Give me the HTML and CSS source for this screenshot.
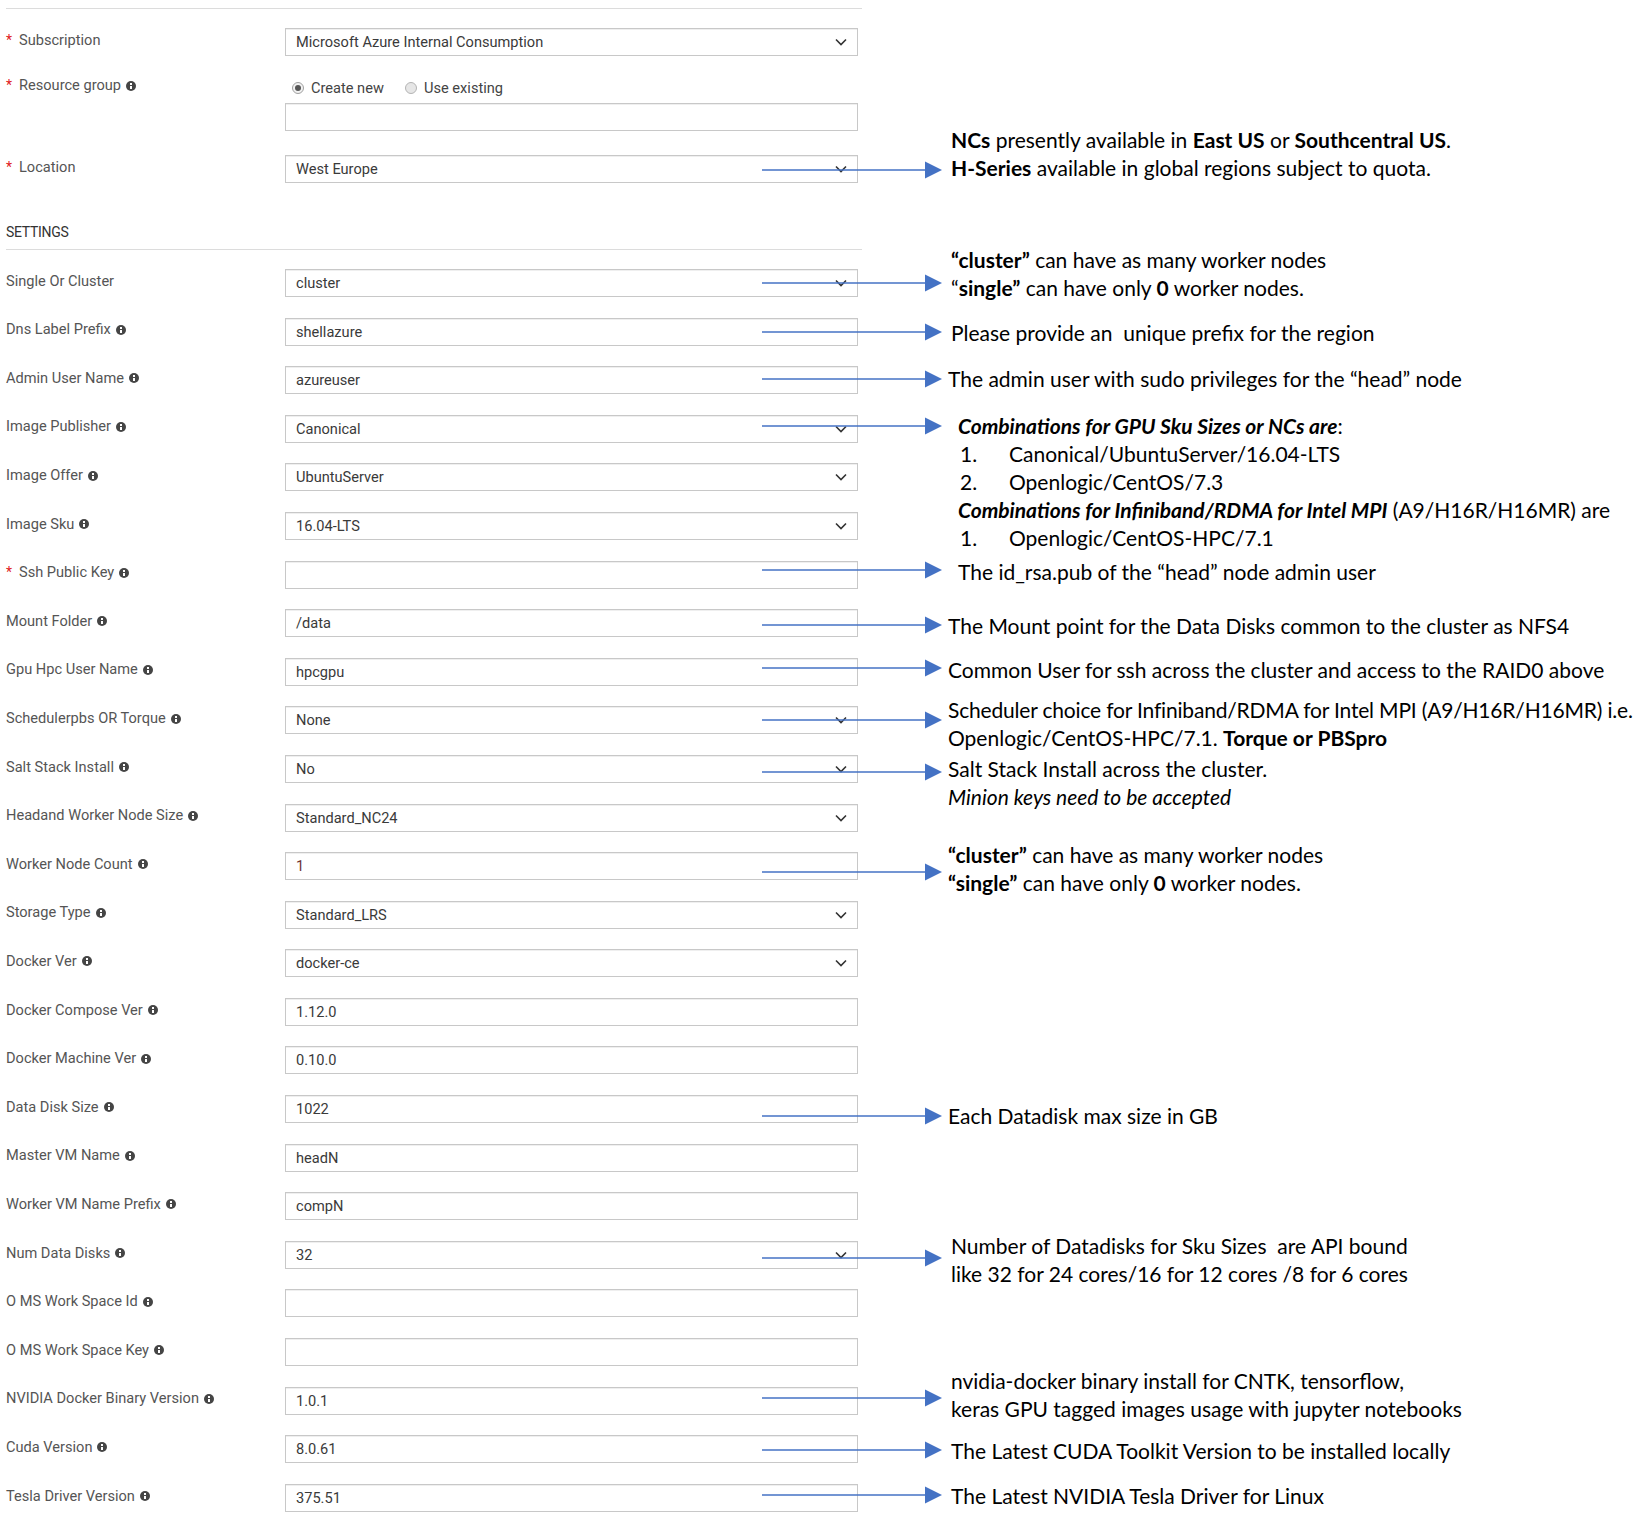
FILE: index.html
```html
<!DOCTYPE html>
<html lang="en">
<head>
<meta charset="utf-8">
<title>Settings</title>
<link rel="stylesheet" href="styles.css">
</head>
<body>
<div class="page">
  <div class="rule top-rule"></div>

  <div class="row r-sub">
    <div class="label"><span class="req">*</span>Subscription</div>
    <div class="field">Microsoft Azure Internal Consumption<svg class="chev" width="12" height="8" viewBox="0 0 12 8"><path d="M1 1.5 L6 6.5 L11 1.5"/></svg></div>
  </div>

  <div class="row r-rg">
    <div class="label"><span class="req">*</span>Resource group<span class="info"></span></div>
    <div class="fieldcol">
      <div class="radios">
        <div class="opt opt1"><span class="radio on"></span>Create new</div>
        <div class="opt"><span class="radio"></span>Use existing</div>
      </div>
      <div class="field field-rg"></div>
    </div>
  </div>

  <div class="row">
    <div class="label"><span class="req">*</span>Location</div>
    <div class="field">West Europe<svg class="chev" width="12" height="8" viewBox="0 0 12 8"><path d="M1 1.5 L6 6.5 L11 1.5"/></svg></div>
    <div class="ann k-loc"><svg class="arrow" width="180" height="18" viewBox="0 0 180 18"><line x1="0" y1="9" x2="166" y2="9"/><path d="M163 0.5 L180 9 L163 17.5 Z"/></svg><div class="txt"><div><b>NCs</b> presently available in <b>East US</b> or <b>Southcentral US</b>.</div><div><b>H-Series</b> available in global regions subject to quota.</div></div></div>
  </div>

  <div class="section">SETTINGS</div>
  <div class="rule sec-rule"></div>

  <div class="rows">
    <div class="row">
      <div class="label">Single Or Cluster</div>
      <div class="field">cluster<svg class="chev" width="12" height="8" viewBox="0 0 12 8"><path d="M1 1.5 L6 6.5 L11 1.5"/></svg></div>
      <div class="ann k-single"><svg class="arrow" width="180" height="18" viewBox="0 0 180 18"><line x1="0" y1="9" x2="166" y2="9"/><path d="M163 0.5 L180 9 L163 17.5 Z"/></svg><div class="txt"><div><b>“cluster”</b> can have as many worker nodes</div><div>“<b>single”</b> can have only <b>0</b> worker nodes.</div></div></div>
    </div>

    <div class="row">
      <div class="label">Dns Label Prefix<span class="info"></span></div>
      <div class="field">shellazure</div>
      <div class="ann k-dns"><svg class="arrow" width="180" height="18" viewBox="0 0 180 18"><line x1="0" y1="9" x2="166" y2="9"/><path d="M163 0.5 L180 9 L163 17.5 Z"/></svg><div class="txt">Please provide an&nbsp; unique prefix for the region</div></div>
    </div>

    <div class="row">
      <div class="label">Admin User Name<span class="info"></span></div>
      <div class="field">azureuser</div>
      <div class="ann k-admin"><svg class="arrow" width="180" height="18" viewBox="0 0 180 18"><line x1="0" y1="9" x2="166" y2="9"/><path d="M163 0.5 L180 9 L163 17.5 Z"/></svg><div class="txt near">The admin user with sudo privileges for the “head” node</div></div>
    </div>

    <div class="row">
      <div class="label">Image Publisher<span class="info"></span></div>
      <div class="field">Canonical<svg class="chev" width="12" height="8" viewBox="0 0 12 8"><path d="M1 1.5 L6 6.5 L11 1.5"/></svg></div>
      <div class="ann k-pub"><svg class="arrow" width="180" height="18" viewBox="0 0 180 18"><line x1="0" y1="9" x2="166" y2="9"/><path d="M163 0.5 L180 9 L163 17.5 Z"/></svg><div class="txt far">
        <div><b><i>Combinations for GPU Sku Sizes or NCs are</i></b>:</div>
        <div class="li"><span class="num">1.</span>Canonical/UbuntuServer/16.04-LTS</div>
        <div class="li"><span class="num">2.</span>Openlogic/CentOS/7.3</div>
        <div><b><i>Combinations for Infiniband/RDMA for Intel MPI</i></b> (A9/H16R/H16MR) are</div>
        <div class="li"><span class="num">1.</span>Openlogic/CentOS-HPC/7.1</div>
      </div></div>
    </div>

    <div class="row">
      <div class="label">Image Offer<span class="info"></span></div>
      <div class="field">UbuntuServer<svg class="chev" width="12" height="8" viewBox="0 0 12 8"><path d="M1 1.5 L6 6.5 L11 1.5"/></svg></div>
    </div>

    <div class="row">
      <div class="label">Image Sku<span class="info"></span></div>
      <div class="field">16.04-LTS<svg class="chev" width="12" height="8" viewBox="0 0 12 8"><path d="M1 1.5 L6 6.5 L11 1.5"/></svg></div>
    </div>

    <div class="row">
      <div class="label"><span class="req">*</span>Ssh Public Key<span class="info"></span></div>
      <div class="field"></div>
      <div class="ann k-ssh"><svg class="arrow" width="180" height="18" viewBox="0 0 180 18"><line x1="0" y1="9" x2="166" y2="9"/><path d="M163 0.5 L180 9 L163 17.5 Z"/></svg><div class="txt far">The id_rsa.pub of the “head” node admin user</div></div>
    </div>

    <div class="row">
      <div class="label">Mount Folder<span class="info"></span></div>
      <div class="field">/data</div>
      <div class="ann k-mount"><svg class="arrow" width="180" height="18" viewBox="0 0 180 18"><line x1="0" y1="9" x2="166" y2="9"/><path d="M163 0.5 L180 9 L163 17.5 Z"/></svg><div class="txt near">The Mount point for the Data Disks common to the cluster as NFS4</div></div>
    </div>

    <div class="row">
      <div class="label">Gpu Hpc User Name<span class="info"></span></div>
      <div class="field">hpcgpu</div>
      <div class="ann k-gpu"><svg class="arrow" width="180" height="18" viewBox="0 0 180 18"><line x1="0" y1="9" x2="166" y2="9"/><path d="M163 0.5 L180 9 L163 17.5 Z"/></svg><div class="txt near">Common User for ssh across the cluster and access to the RAID0 above</div></div>
    </div>

    <div class="row">
      <div class="label">Schedulerpbs OR Torque<span class="info"></span></div>
      <div class="field">None<svg class="chev" width="12" height="8" viewBox="0 0 12 8"><path d="M1 1.5 L6 6.5 L11 1.5"/></svg></div>
      <div class="ann k-sched"><svg class="arrow" width="180" height="18" viewBox="0 0 180 18"><line x1="0" y1="9" x2="166" y2="9"/><path d="M163 0.5 L180 9 L163 17.5 Z"/></svg><div class="txt near"><div class="tight">Scheduler choice for Infiniband/RDMA for Intel MPI (A9/H16R/H16MR) i.e.</div><div>Openlogic/CentOS-HPC/7.1. <b>Torque or PBSpro</b></div></div></div>
    </div>

    <div class="row">
      <div class="label">Salt Stack Install<span class="info"></span></div>
      <div class="field">No<svg class="chev" width="12" height="8" viewBox="0 0 12 8"><path d="M1 1.5 L6 6.5 L11 1.5"/></svg></div>
      <div class="ann k-salt"><svg class="arrow" width="180" height="18" viewBox="0 0 180 18"><line x1="0" y1="9" x2="166" y2="9"/><path d="M163 0.5 L180 9 L163 17.5 Z"/></svg><div class="txt near"><div>Salt Stack Install across the cluster.</div><div><i>Minion keys need to be accepted</i></div></div></div>
    </div>

    <div class="row">
      <div class="label">Headand Worker Node Size<span class="info"></span></div>
      <div class="field">Standard_NC24<svg class="chev" width="12" height="8" viewBox="0 0 12 8"><path d="M1 1.5 L6 6.5 L11 1.5"/></svg></div>
    </div>

    <div class="row">
      <div class="label">Worker Node Count<span class="info"></span></div>
      <div class="field"><span class="val-count">1</span></div>
      <div class="ann k-wnc"><svg class="arrow" width="180" height="18" viewBox="0 0 180 18"><line x1="0" y1="9" x2="166" y2="9"/><path d="M163 0.5 L180 9 L163 17.5 Z"/></svg><div class="txt near"><div><b>“cluster”</b> can have as many worker nodes</div><div><b>“single”</b> can have only <b>0</b> worker nodes.</div></div></div>
    </div>

    <div class="row">
      <div class="label">Storage Type<span class="info"></span></div>
      <div class="field">Standard_LRS<svg class="chev" width="12" height="8" viewBox="0 0 12 8"><path d="M1 1.5 L6 6.5 L11 1.5"/></svg></div>
    </div>

    <div class="row">
      <div class="label">Docker Ver<span class="info"></span></div>
      <div class="field">docker-ce<svg class="chev" width="12" height="8" viewBox="0 0 12 8"><path d="M1 1.5 L6 6.5 L11 1.5"/></svg></div>
    </div>

    <div class="row">
      <div class="label">Docker Compose Ver<span class="info"></span></div>
      <div class="field">1.12.0</div>
    </div>

    <div class="row">
      <div class="label">Docker Machine Ver<span class="info"></span></div>
      <div class="field">0.10.0</div>
    </div>

    <div class="row">
      <div class="label">Data Disk Size<span class="info"></span></div>
      <div class="field">1022</div>
      <div class="ann k-data"><svg class="arrow" width="180" height="18" viewBox="0 0 180 18"><line x1="0" y1="9" x2="166" y2="9"/><path d="M163 0.5 L180 9 L163 17.5 Z"/></svg><div class="txt near">Each Datadisk max size in GB</div></div>
    </div>

    <div class="row">
      <div class="label">Master VM Name<span class="info"></span></div>
      <div class="field">headN</div>
    </div>

    <div class="row">
      <div class="label">Worker VM Name Prefix<span class="info"></span></div>
      <div class="field">compN</div>
    </div>

    <div class="row">
      <div class="label">Num Data Disks<span class="info"></span></div>
      <div class="field">32<svg class="chev" width="12" height="8" viewBox="0 0 12 8"><path d="M1 1.5 L6 6.5 L11 1.5"/></svg></div>
      <div class="ann k-num"><svg class="arrow" width="180" height="18" viewBox="0 0 180 18"><line x1="0" y1="9" x2="166" y2="9"/><path d="M163 0.5 L180 9 L163 17.5 Z"/></svg><div class="txt"><div>Number of Datadisks for Sku Sizes&nbsp; are API bound</div><div>like 32 for 24 cores/16 for 12 cores /8 for 6 cores</div></div></div>
    </div>

    <div class="row">
      <div class="label">O MS Work Space Id<span class="info"></span></div>
      <div class="field"></div>
    </div>

    <div class="row">
      <div class="label">O MS Work Space Key<span class="info"></span></div>
      <div class="field"></div>
    </div>

    <div class="row">
      <div class="label">NVIDIA Docker Binary Version<span class="info"></span></div>
      <div class="field">1.0.1</div>
      <div class="ann k-nvidia"><svg class="arrow" width="180" height="18" viewBox="0 0 180 18"><line x1="0" y1="9" x2="166" y2="9"/><path d="M163 0.5 L180 9 L163 17.5 Z"/></svg><div class="txt"><div>nvidia-docker binary install for CNTK, tensorflow,</div><div>keras GPU tagged images usage with jupyter notebooks</div></div></div>
    </div>

    <div class="row">
      <div class="label">Cuda Version<span class="info"></span></div>
      <div class="field">8.0.61</div>
      <div class="ann k-cuda"><svg class="arrow" width="180" height="18" viewBox="0 0 180 18"><line x1="0" y1="9" x2="166" y2="9"/><path d="M163 0.5 L180 9 L163 17.5 Z"/></svg><div class="txt">The Latest CUDA Toolkit Version to be installed locally</div></div>
    </div>

    <div class="row">
      <div class="label">Tesla Driver Version<span class="info"></span></div>
      <div class="field">375.51</div>
      <div class="ann k-tesla"><svg class="arrow" width="180" height="18" viewBox="0 0 180 18"><line x1="0" y1="9" x2="166" y2="9"/><path d="M163 0.5 L180 9 L163 17.5 Z"/></svg><div class="txt">The Latest NVIDIA Tesla Driver for Linux</div></div>
    </div>
  </div>
</div>
</body>
</html>
```

FILE: styles.css
```css
html, body {
  margin: 0;
  padding: 0;
  background: #ffffff;
  overflow: hidden;
}

body {
  font-family: Roboto, "Liberation Sans", sans-serif;
  color: #333;
}

.page {
  padding-left: 6px;
  width: 1635px;
}

.rule {
  width: 856px;
  height: 1px;
  background: #dcdcdc;
}

.top-rule {
  margin-top: 8px;
}

.row {
  display: grid;
  grid-template-columns: 279px 573px 1fr;
  height: 48.6px;
}

.r-sub {
  margin-top: 9px;
  height: 48px;
}

.r-rg {
  height: 79px;
}

.label {
  display: flex;
  align-items: center;
  height: 20px;
  line-height: 20px;
  margin-top: 12px;
  font-size: 14.6px;
  color: #555555;
  white-space: nowrap;
}

.r-rg .label {
  margin-top: 9px;
}

.req {
  display: inline-block;
  width: 13px;
  color: #e0201c;
  font-size: 14px;
}

.info {
  position: relative;
  display: inline-block;
  flex: none;
  width: 10px;
  height: 10px;
  margin-left: 5px;
  margin-top: 1px;
  border-radius: 50%;
  background: #454545;
}

.info::before {
  content: "";
  position: absolute;
  left: 4px;
  top: 2px;
  width: 2px;
  height: 2px;
  background: #fff;
}

.info::after {
  content: "";
  position: absolute;
  left: 4px;
  top: 5px;
  width: 2px;
  height: 3px;
  background: #fff;
}

.field {
  box-sizing: border-box;
  height: 28px;
  margin-top: 10.3px;
  border: 1px solid #c8c8c8;
  box-shadow: inset 0 1px 0 #efefef;
  display: flex;
  align-items: center;
  padding: 0 10px 0 10px;
  font-size: 14.6px;
  color: #3a3a3a;
  white-space: nowrap;
}

.r-sub .field {
  margin-top: 10px;
}

.chev {
  margin-left: auto;
  flex: none;
}

.chev path {
  fill: none;
  stroke: #333;
  stroke-width: 1.6;
}

.val-count {
  color: #6d3434;
}

.fieldcol {
  display: flex;
  flex-direction: column;
}

.radios {
  display: flex;
  align-items: center;
  height: 20px;
  margin-top: 12px;
  padding-left: 7px;
  font-size: 14.6px;
  color: #444;
}

.opt {
  display: flex;
  align-items: center;
  gap: 7px;
}

.opt1 {
  width: 113px;
}

.radio {
  box-sizing: border-box;
  width: 12px;
  height: 12px;
  border-radius: 50%;
  border: 1px solid #b4b4b4;
  background: #e6e6e6;
  display: inline-flex;
  align-items: center;
  justify-content: center;
}

.radio.on {
  background: #f2f2f2;
  border-color: #a0a0a0;
}

.radio.on::after {
  content: "";
  width: 6px;
  height: 6px;
  border-radius: 50%;
  background: #555;
}

.field-rg {
  margin-top: 5px;
}

.section {
  margin-top: 28.4px;
  height: 20px;
  line-height: 20px;
  font-size: 14px;
  font-weight: 400;
  letter-spacing: -0.3px;
  color: #333;
}

.sec-rule {
  margin-top: 7px;
}

.rows {
  margin-top: 8.7px;
}

/* annotations */
.ann {
  display: flex;
  align-items: flex-start;
  margin-left: -96px;
  --ay: 15px;
  --ty: 10px;
}

.arrow {
  flex: none;
  margin-top: var(--ay);
}

.arrow line {
  stroke: #4472c4;
  stroke-width: 1.3;
}

.arrow path {
  fill: #4472c4;
}

.txt {
  margin-top: var(--ty);
  margin-left: 9px;
  font-family: Lato, "Open Sans", sans-serif;
  font-size: 21px;
  line-height: 28px;
  color: #000;
  white-space: nowrap;
}

.txt.near {
  margin-left: 6px;
}

.txt.far {
  margin-left: 16px;
}

.tight {
  letter-spacing: -0.18px;
}

.li {
  padding-left: 2px;
}

.num {
  display: inline-block;
  width: 49px;
}

.k-loc    { --ay: 15.5px; --ty: -19px; }
.k-single { --ay: 15px;   --ty: -13px; }
.k-dns    { --ay: 15.5px; --ty: 11.5px; }
.k-admin  { --ay: 14px;   --ty: 9px; }
.k-pub    { --ay: 12.5px; --ty: 7.5px; }
.k-ssh    { --ay: 11px;   --ty: 8px; }
.k-mount  { --ay: 17px;   --ty: 13px; }
.k-gpu    { --ay: 12px;   --ty: 8.5px; }
.k-sched  { --ay: 15px;   --ty: -0.5px; }
.k-salt   { --ay: 18.5px; --ty: 10.3px; }
.k-wnc    { --ay: 21px;   --ty: -1px; }
.k-data   { --ay: 22px;   --ty: 17px; }
.k-num    { --ay: 18px;   --ty: 1px; }
.k-nvidia { --ay: 13px;   --ty: -9px; }
.k-cuda   { --ay: 16.5px; --ty: 12.5px; }
.k-tesla  { --ay: 12px;   --ty: 8px; }
```
